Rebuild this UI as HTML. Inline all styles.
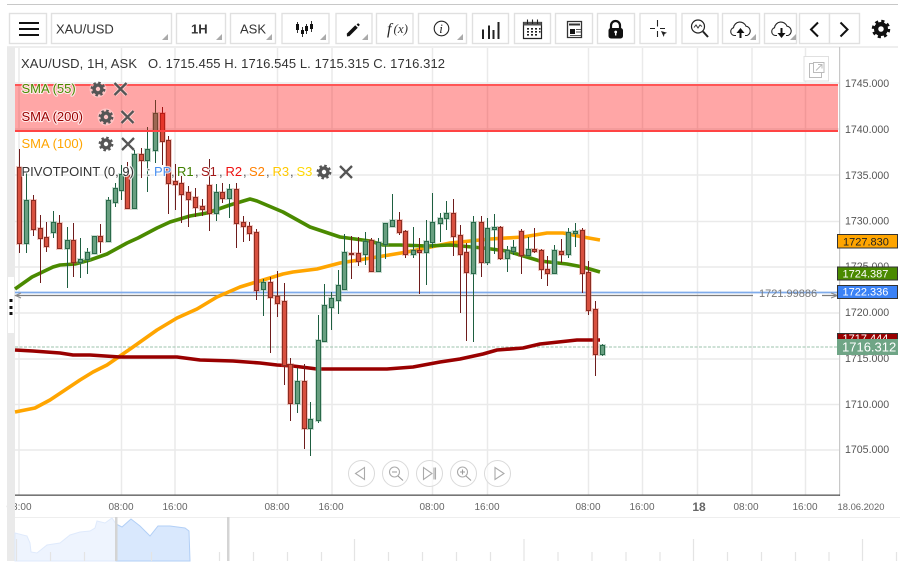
<!DOCTYPE html>
<html><head><meta charset="utf-8"><title>XAU/USD</title>
<style>
html,body{margin:0;padding:0;background:#fff;width:902px;height:567px;overflow:hidden}
svg{display:block;font-family:"Liberation Sans",sans-serif}
</style></head><body>
<svg width="902" height="567" viewBox="0 0 902 567" xmlns="http://www.w3.org/2000/svg">
<defs>
<g id="gear"><circle r="3.9" fill="none" stroke="currentColor" stroke-width="3.4"/><circle r="6.3" fill="none" stroke="currentColor" stroke-width="2.2" stroke-dasharray="2.5 2.45"/></g>
<g id="x"><path d="M-6 -6L6 6M6 -6L-6 6" stroke="#fff" stroke-opacity=".5" stroke-width="4" fill="none"/><path d="M-6 -6L6 6M6 -6L-6 6" stroke="#555" stroke-width="2.3" fill="none"/></g>
<path id="tri" d="M0 6L6 6L6 0Z" fill="#aaa"/>
<path id="rb" d="M17.500 167.500h4v76h-4zM31.500 200.500h4v29h-4zM38.500 228.500h4v10h-4zM44.500 237.500h4v9h-4zM57.500 223.500h4v25h-4zM71.500 240.500h4v22h-4zM98.500 236.500h4v5h-4zM125.500 175.500h4v33h-4zM139.500 154.500h4v6h-4zM160.500 113.500h4v28h-4zM166.500 140.500h4v43h-4zM173.500 181.500h4v3h-4zM179.500 183.500h4v11h-4zM186.500 192.500h4v7h-4zM193.500 197.500h4v10h-4zM200.500 206.500h4v3h-4zM207.500 185.500h4v28h-4zM220.500 192.500h4v6h-4zM234.500 189.500h4v34h-4zM241.500 222.500h4v4h-4zM247.500 226.500h4v7h-4zM254.500 232.500h4v58h-4zM268.500 282.500h4v15h-4zM275.500 296.500h4v7h-4zM282.500 301.500h4v64h-4zM288.500 364.500h4v39h-4zM302.500 381.500h4v47h-4zM349.500 253.500h4v1h-4zM356.500 253.500h4v8h-4zM369.500 240.500h4v31h-4zM397.500 220.500h4v12h-4zM403.500 231.500h4v23h-4zM417.500 250.500h4v2h-4zM451.500 213.500h4v23h-4zM458.500 235.500h4v19h-4zM464.500 252.500h4v20h-4zM479.500 222.500h4v40h-4zM498.500 227.500h4v31h-4zM519.500 231.500h4v24h-4zM532.500 249.500h4v2h-4zM539.500 250.500h4v19h-4zM545.500 269.500h4v4h-4zM559.500 251.500h4v3h-4zM580.500 230.500h4v43h-4zM586.500 272.500h4v38h-4zM593.500 309.500h4v45h-4z"/>
<path id="gb" d="M24.500 200.500h4v43h-4zM51.500 222.500h4v10h-4zM65.500 240.500h4v8h-4zM78.500 259.500h4v3h-4zM85.500 252.500h4v7h-4zM92.500 236.500h4v17h-4zM106.500 200.500h4v41h-4zM113.500 188.500h4v14h-4zM119.500 174.500h4v16h-4zM132.500 154.500h4v54h-4zM145.500 149.500h4v11h-4zM153.500 113.500h4v37h-4zM214.500 192.500h4v21h-4zM227.500 189.500h4v9h-4zM261.500 282.500h4v7h-4zM295.500 381.500h4v22h-4zM308.500 419.500h4v9h-4zM316.500 340.500h4v80h-4zM322.500 305.500h4v36h-4zM329.500 298.500h4v9h-4zM336.500 285.500h4v15h-4zM342.500 252.500h4v37h-4zM363.500 241.500h4v13h-4zM376.500 242.500h4v29h-4zM383.500 223.500h4v21h-4zM390.500 220.500h4v6h-4zM411.500 250.500h4v4h-4zM424.500 241.500h4v11h-4zM430.500 222.500h4v20h-4zM438.500 218.500h4v5h-4zM444.500 213.500h4v5h-4zM471.500 222.500h4v51h-4zM485.500 228.500h4v34h-4zM492.500 227.500h4v2h-4zM505.500 250.500h4v8h-4zM511.500 247.500h4v4h-4zM526.500 249.500h4v6h-4zM552.500 250.500h4v23h-4zM566.500 232.500h4v22h-4zM573.500 231.500h4v2h-4zM600.500 345.500h4v9h-4z"/>
<path id="cloud" d="M736 35.500H734.500a4 4 0 0 1 -1 -7.800a6.500 6.500 0 0 1 12.500 -1.500a4.800 4.800 0 0 1 1 9.300H745"/>
</defs>
<rect width="902" height="567" fill="#fff"/>
<!-- top rule -->
<rect x="7" y="4" width="891" height="1" fill="#c8c8c8"/>
<!-- toolbar buttons -->
<g fill="#fff" stroke="#e0e0e0" stroke-width="1.4">
<rect x="9.500" y="13.500" width="37" height="30"/><rect x="51.500" y="13.500" width="120" height="30"/><rect x="176.500" y="13.500" width="49" height="30"/><rect x="230.500" y="13.500" width="45" height="30"/><rect x="282" y="13.500" width="47" height="30"/><rect x="336" y="13.500" width="36" height="30"/><rect x="376.500" y="13.500" width="36.500" height="30"/><rect x="418.500" y="13.500" width="48" height="30"/><rect x="472.500" y="13.500" width="36" height="30"/><rect x="514.500" y="13.500" width="36" height="30"/><rect x="555.500" y="13.500" width="37" height="30"/><rect x="597.500" y="13.500" width="37" height="30"/><rect x="640" y="13.500" width="36" height="30"/><rect x="682" y="13.500" width="36" height="30"/><rect x="722.500" y="13.500" width="37" height="30"/><rect x="764.500" y="13.500" width="32" height="30"/><rect x="799.500" y="13.500" width="30" height="30"/><rect x="829.500" y="13.500" width="30" height="30"/>
</g>
<g><use href="#tri" x="162" y="34"/><use href="#tri" x="216" y="34"/><use href="#tri" x="266" y="34"/><use href="#tri" x="320" y="34"/><use href="#tri" x="362" y="34"/><use href="#tri" x="457" y="34"/><use href="#tri" x="750" y="34"/><use href="#tri" x="790" y="34"/></g>
<path d="M19 23H39M19 29H39M19 35H39" stroke="#111" stroke-width="2"/>
<text x="56" y="33.500" font-size="13" fill="#333">XAU/USD</text>
<text x="191" y="33.500" font-size="13" font-weight="bold" fill="#333">1H</text>
<text x="240" y="33.500" font-size="13" fill="#333">ASK</text>
<!-- candle icon -->
<path d="M297.500 22V33M302.500 27V37M306.500 24V34M311.500 21V32" stroke="#333" stroke-width="1"/><path d="M296 24h3v6h-3zM301 30h3v4h-3zM305 26h3v5h-3zM310 24h3v5h-3z" fill="#111"/>
<!-- pen -->
<path d="M348 35L356.500 26.500" stroke="#111" stroke-width="3.600"/><path d="M347 36.500L346.800 33.800L349.500 36Z" fill="#111"/><path d="M357.500 25.500L359 24" stroke="#111" stroke-width="2.600"/>
<!-- f(x) -->
<text x="387" y="34" font-family="Liberation Serif,serif" font-style="italic" font-size="16" fill="#222">f</text><text x="393.500" y="33" font-family="Liberation Serif,serif" font-style="italic" font-size="13" fill="#333">(x)</text>
<!-- info -->
<circle cx="441.500" cy="28.500" r="7.300" fill="none" stroke="#222" stroke-width="1.100"/><text x="439.300" y="33" font-family="Liberation Serif,serif" font-style="italic" font-size="13" fill="#222">i</text>
<!-- bars -->
<path d="M483 39V29.500M489 39V25.500M493.500 39V30M498.500 39V22" stroke="#222" stroke-width="2"/>
<!-- calendar -->
<path d="M523.500 22.500H541.500V38.500H523.500Z" fill="none" stroke="#222" stroke-width="1.200"/><path d="M523.500 22h18v3.500h-18z" fill="#555"/><path d="M527.500 19.500V24M532.500 19.500V24M537.500 19.500V24" stroke="#222" stroke-width="1.100"/><path d="M527 28h2v1.600h-2zM531 28h2v1.600h-2zM535 28h2v1.600h-2zM539 28h1.500v1.600h-1.500zM527 31h2v1.600h-2zM531 31h2v1.600h-2zM535 31h2v1.600h-2zM539 31h1.500v1.600h-1.500zM527 34h2v1.600h-2zM531 34h2v1.600h-2zM535 34h2v1.600h-2z" fill="#222"/>
<!-- news -->
<path d="M567.500 21.500H581.500V37.500H567.500Z" fill="none" stroke="#333" stroke-width="1.300"/><path d="M569 23.500h11v2h-11z" fill="#333"/><path d="M570 29h5v5h-5z" fill="#111"/><path d="M576 29.500h5M576 32h5M570 35.500h11" stroke="#555" stroke-width="1"/>
<!-- lock -->
<path d="M611 29V25.500a4.500 4.500 0 0 1 9 0V29" fill="none" stroke="#111" stroke-width="2.200"/><rect x="608.500" y="28" width="14.500" height="10.500" rx="2.500" fill="#111"/><circle cx="615.700" cy="32" r="1.400" fill="#fff"/><rect x="615" y="32" width="1.400" height="3.500" fill="#fff"/>
<!-- crosshair -->
<path d="M657.500 20V26.500M657.500 31V37M650 28.500H655M660 28.500H665" stroke="#222" stroke-width="1.100"/><path d="M661 31L667 32.800L664.500 34L663.800 37Z" fill="#222"/>
<!-- zoom chart -->
<circle cx="698" cy="26.500" r="6.500" fill="none" stroke="#222" stroke-width="1.200"/><path d="M694 27.500L696 25L698 28L700 25L702 26.500" fill="none" stroke="#333" stroke-width="1"/><path d="M703 31.500L708 37" stroke="#222" stroke-width="2"/>
<!-- clouds -->
<use href="#cloud" fill="none" stroke="#222" stroke-width="1.100"/><path d="M740.500 38V31.500" stroke="#111" stroke-width="2"/><path d="M736.500 33L740.500 28L744.500 33Z" fill="#111"/>
<use href="#cloud" transform="translate(41 0)" fill="none" stroke="#222" stroke-width="1.100"/><path d="M781.500 28V33.500" stroke="#111" stroke-width="2"/><path d="M777.500 33L781.500 38L785.500 33Z" fill="#111"/>
<!-- chevrons -->
<path d="M818 22.500L811 29.500L818 36.500" fill="none" stroke="#111" stroke-width="2"/><path d="M840.500 22.500L847.500 29.500L840.500 36.500" fill="none" stroke="#111" stroke-width="2"/>
<use href="#gear" x="881" y="29" color="#111" transform="translate(881 29) scale(1.250) translate(-881 -29)"/>

<!-- chart frame -->
<rect x="7" y="46" width="891" height="2" fill="#eee"/>
<rect x="7" y="47" width="8" height="514" fill="#eaeaea"/>
<rect x="8" y="277" width="6" height="56" fill="#fff"/>
<path d="M9.500 299h3v3h-3zM9.500 306h3v3h-3zM9.500 312h3v3h-3z" fill="#111"/>
<!-- grid -->
<g stroke="#eaeaea" stroke-width="1.500" fill="none">
<path d="M15 83H839M15 129H839M15 175H839M15 221.500H839M15 267H839M15 313H839M15 359H839M15 404.500H839M15 450H839"/>
<path d="M19 48V495M121.500 48V495M175 48V495M277.500 48V495M332 48V495M432.500 48V495M487.500 48V495M588.500 48V495M642.500 48V495M697.500 48V495M752 48V495M805.500 48V495"/>
</g>
<!-- horizontal levels -->
<path d="M15 292.500H839" stroke="#7fabea" stroke-width="1.800"/>
<path d="M15 295.500H753M822 295.500H838" stroke="#7c7c7c" stroke-width="1.200"/>
<path d="M21 293L15.500 295.500L21 298M831 293L837.500 295.500L831 298" fill="none" stroke="#8a8a8a" stroke-width="1"/>
<text x="759" y="297" font-size="11" fill="#777">1721.99886</text>
<path d="M15 347H839" stroke="#9cc3ac" stroke-width="1" stroke-dasharray="3 1.500"/>
<!-- moving averages -->
<g fill="none" stroke-linejoin="round" stroke-linecap="butt">
<path stroke="#ffa500" stroke-width="3.600" d="M15 412L35 408L50 400L65 390L80 380L93 372L107 365L120 356L133 347L157 330L177 318L197 309L217 297L240 287L253 283L263 280L283 274L293 272L317 269L340 263L383 256L407 252L450 243L490 239L523 237L547 233L563 233L583 237L600 240"/>
<path stroke="#4a8a00" stroke-width="3.600" d="M15 289L32 277L53 267L60 265L75 264L90 260L107 254L127 243L138 238L157 228L170 222L190 216L207 213L230 205L250 199L257 201L283 212L310 227L340 237L370 241L383 245L400 245L427 246L450 245L483 248L507 251L540 261L567 264L583 267L600 272"/>
<path stroke="#990000" stroke-width="3.600" d="M15 350L33 351L60 353L73 355L90 355L120 357L177 357L200 360L233 361L260 363L277 365L293 366L317 369L387 369L413 367L440 362L460 359L483 354L497 350L523 348L540 344L577 340L600 340"/>
</g>
<!-- candles -->
<g stroke="#6e1c1c" stroke-width="1" fill="none">
<path d="M19.500 149V253M33.500 195V236M40.500 215V283M46.500 222V252M59.500 215V249M73.500 223V277M100.500 224V253M127.500 162V208M141.500 148V178M162.500 107V165M168.500 136V214M175.500 164V210M181.500 176V223M188.500 186V227M195.500 188V217M202.500 199V216M209.500 159V231M222.500 183V203M236.500 183V248M243.500 216V242M249.500 222V241M256.500 229V300M270.500 277V353M277.500 271V317M284.500 283V385M290.500 358V421M304.500 364V449M351.500 236V279M358.500 237V266M371.500 238V271M399.500 212V235M405.500 230V258M419.500 238V294M453.500 199V256M460.500 225V313M466.500 243V341M481.500 216V277M500.500 226V260M521.500 229V274M534.500 228V253M541.500 249V279M547.500 256V286M561.500 239V263M582.500 228V293M588.500 261V315M595.500 301V376"/>
</g>
<g stroke="#1e5e40" stroke-width="1" fill="none">
<path d="M26.500 173V253M53.500 211V238M67.500 227V288M80.500 238V278M87.500 248V274M94.500 236V253M108.500 197V241M115.500 183V207M121.500 165V200M134.500 150V209M147.500 127V192M155.500 100V163M216.500 184V221M229.500 184V218M263.500 279V316M297.500 368V413M310.500 402V456M318.500 315V423M324.500 284V342M331.500 292V330M338.500 270V314M344.500 234V289M365.500 232V265M378.500 238V272M385.500 223V259M392.500 194V226M413.500 227V258M426.500 220V285M432.500 193V248M440.500 213V242M446.500 201V230M473.500 216V342M487.500 218V265M494.500 214V254M507.500 246V272M513.500 240V255M528.500 237V256M554.500 245V273M568.500 228V258M575.500 223V247M602.500 344V356"/>
</g>
<g fill="none" stroke="#d8503f" stroke-opacity=".3" stroke-width="3"><use href="#rb"/></g>
<g fill="none" stroke="#689f80" stroke-opacity=".35" stroke-width="3"><use href="#gb"/></g>
<g fill="#d8503f" stroke="#8c2d22" stroke-width="1"><use href="#rb"/></g>
<g fill="#689f80" stroke="#2a6a4a" stroke-width="1"><use href="#gb"/></g>
<!-- red zone -->
<rect x="15" y="85" width="823" height="46" fill="#ff0000" fill-opacity=".35"/>
<rect x="15" y="84" width="823" height="2" fill="#f55"/><rect x="15" y="130" width="823" height="2" fill="#f44"/>
<!-- legend -->
<text x="21" y="68" font-size="13" fill="#333" textLength="116">XAU/USD, 1H, ASK</text>
<text x="148" y="68" font-size="13" fill="#333" textLength="297">O. 1715.455 H. 1716.545 L. 1715.315 C. 1716.312</text>
<g font-size="13" stroke="#fff" stroke-opacity=".75" stroke-width="2.200" paint-order="stroke" stroke-linejoin="round">
<text x="21.500" y="93" fill="#4a8a00">SMA (55)</text>
<text x="21.500" y="121" fill="#990000">SMA (200)</text>
<text x="21.500" y="148" fill="#ffa500">SMA (100)</text>
<text x="21.500" y="176" fill="#333">PIVOTPOINT (0, 9)</text>
<text x="147" y="176" fill="#555">:</text>
<text x="154" y="176" fill="#4a90f0">PP</text><text x="171" y="176" fill="#555">,</text>
<text x="177" y="176" fill="#3f8000">R1</text><text x="195" y="176" fill="#555">,</text>
<text x="201" y="176" fill="#a01818">S1</text><text x="219" y="176" fill="#555">,</text>
<text x="225.500" y="176" fill="#ee1111">R2</text><text x="243" y="176" fill="#555">,</text>
<text x="249" y="176" fill="#ff8000">S2</text><text x="266" y="176" fill="#555">,</text>
<text x="272.500" y="176" fill="#ffc800">R3</text><text x="290" y="176" fill="#555">,</text>
<text x="296.500" y="176" fill="#ffd800">S3</text>
</g>
<g color="#555">
<circle cx="98" cy="89" r="8.500" fill="#fff" fill-opacity=".35"/><use href="#gear" x="98" y="89"/><use href="#x" x="120.500" y="89"/>
<circle cx="106" cy="117" r="8.500" fill="#fff" fill-opacity=".35"/><use href="#gear" x="106" y="117"/><use href="#x" x="127.500" y="117"/>
<use href="#gear" x="106" y="144"/><use href="#x" x="128" y="144"/>
<use href="#gear" x="324" y="172"/><use href="#x" x="346" y="172"/>
</g>
<!-- popout button -->
<rect x="804" y="56.500" width="24.500" height="24.500" fill="#fff" stroke="#e0e0e0"/>
<path d="M815.500 63.500H809.500V77.500H821.500V72" fill="none" stroke="#bbb" stroke-width="1"/><rect x="813.500" y="62.500" width="10.500" height="10" fill="#fff" stroke="#bbb"/><path d="M816 70.500L822 64.500M818 64.500H822V68.500" fill="none" stroke="#bbb" stroke-width="1"/>
<!-- right axis -->
<rect x="839" y="47" width="1.200" height="449" fill="#c8c8c8"/>
<g font-size="10.600" fill="#555">
<text x="845" y="87">1745.000</text><text x="845" y="133">1740.000</text><text x="845" y="179">1735.000</text><text x="845" y="224.500">1730.000</text><text x="845" y="270">1725.000</text><text x="845" y="316">1720.000</text><text x="845" y="362">1715.000</text><text x="845" y="408">1710.000</text><text x="845" y="453">1705.000</text>
</g>
<g stroke="#333" stroke-width="1">
<rect x="837.500" y="234.500" width="60" height="13.500" fill="#ffa500"/>
<rect x="837.500" y="267" width="60" height="13" fill="#4a8a00"/>
<rect x="837.500" y="285.500" width="60" height="13" fill="#3b82f6"/>
<rect x="837.500" y="333.500" width="60" height="10" fill="#990000"/>
</g>
<g font-size="11">
<text x="843" y="245.500" fill="#222">1727.830</text>
<text x="842.500" y="277.500" fill="#fff">1724.387</text>
<text x="842.500" y="295.500" fill="#fff">1722.336</text>
<text x="842.500" y="342" fill="#fff">1717.444</text>
</g>
<rect x="837" y="339" width="61" height="16" fill="#6fa586"/>
<text x="842" y="351.500" font-size="13" fill="#fff">1716.312</text>
<!-- nav buttons -->
<g fill="#fff" fill-opacity=".6" stroke="#dadada" stroke-width="1">
<circle cx="361.500" cy="473.500" r="13"/><circle cx="395.500" cy="473.500" r="13"/><circle cx="429.500" cy="473.500" r="13"/><circle cx="463.500" cy="473.500" r="13"/><circle cx="497.500" cy="473.500" r="13"/>
</g>
<g fill="none" stroke="#aaa" stroke-width="1.100">
<path d="M364.500 467.500V479.500L355.500 473.500Z"/>
<circle cx="394.500" cy="472" r="5"/><path d="M392 472H397M398 476L403 480.500" stroke="#999"/>
<path d="M423.500 467.500V479.500L432 473.500ZM434 467.500V479.500M435.500 467.500V479.500"/>
<circle cx="462.500" cy="472" r="5"/><path d="M460 472H465M462.500 469.500V474.500M466 476L471 480.500" stroke="#999"/>
<path d="M495 467.500V479.500L504 473.500Z"/>
</g>
<!-- time axis -->
<rect x="15" y="494.500" width="825" height="1.300" fill="#555"/>
<g font-size="10" fill="#666" text-anchor="middle">
<text x="19" y="510">08:00</text><text x="121" y="510">08:00</text><text x="175" y="510">16:00</text><text x="277" y="510">08:00</text><text x="331" y="510">16:00</text><text x="432" y="510">08:00</text><text x="487" y="510">16:00</text><text x="588" y="510">08:00</text><text x="642" y="510">16:00</text><text x="746" y="510">08:00</text><text x="805" y="510">16:00</text><text x="861" y="510" font-size="9.400">18.06.2020</text>
<text x="699" y="511" font-size="12" font-weight="bold">18</text>
</g>
<rect x="7" y="498" width="8" height="16" fill="#eaeaea"/>
<!-- navigator -->
<rect x="15" y="517" width="885" height="1" fill="#eee"/>
<path d="M15 533L27 536L30 543L31 552L37 553L47 545L60 543L70 535L80 532L90 531L95 528L97 521L105 523L112 518L116 524V561H15Z" fill="#eef4fe" stroke="#dfeafc" stroke-width="1"/>
<path d="M116 524L122 527L131 519L140 526L150 536L158 526L170 526L185 528L189 531L190 561H116Z" fill="#d9e8fd" stroke="#b2cff6" stroke-width="1"/>
<g stroke="#e4e4e4" stroke-width="1.200">
<path d="M16.500 539V561M50.500 552V561M84.500 552V561M151.500 552V561M219.500 552V561M253.500 552V561M287.500 552V561M321.500 552V561M354.500 539V561M388.500 552V561M422.500 552V561M456.500 552V561M490.500 552V561M524 539V561M558 552V561M592 552V561M626 552V561M660 552V561M693.500 539V561M727.500 552V561M761.500 552V561M795.500 552V561M829 552V561M862.500 539V561M896.500 552V561"/>
</g>
<rect x="115" y="517" width="2.500" height="44" fill="#d4d4d4"/>
<rect x="227" y="517" width="2.500" height="44" fill="#d4d4d4"/>
</svg>
</body></html>
